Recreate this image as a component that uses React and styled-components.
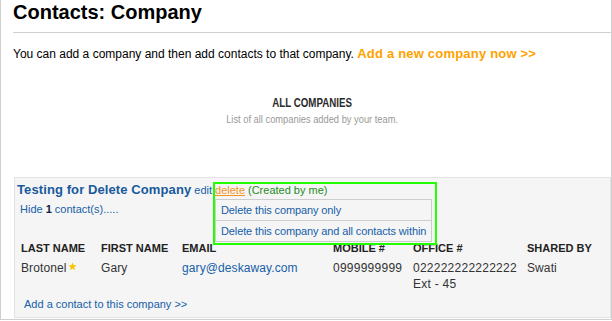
import React from "react";
import styled, { createGlobalStyle } from "styled-components";

const Global = createGlobalStyle`
  html, body { margin: 0; padding: 0; background: #fff; }
  body { font-family: "Liberation Sans", Arial, Helvetica, sans-serif; }
`;

const Page = styled.div`
  box-sizing: border-box;
  width: 612px;
  height: 320px;
  padding-left: 12px;
  border-left: 1px solid #cfcfcf;
  border-right: 1px solid #cfcfcf;
  border-bottom: 1px solid #cfcfcf;
  display: flex;
  flex-direction: column;
`;

const Title = styled.h1`
  margin: 0;
  font-size: 20px;
  line-height: 24px;
  font-weight: bold;
  color: #000;
`;

const Rule = styled.div`
  margin-top: 8px;
  border-top: 1px solid #cfcfcf;
`;

const Intro = styled.p`
  margin: 13px 0 0;
  font-size: 12px;
  line-height: 16px;
  color: #000;
`;

const AddCompany = styled.a`
  font-size: 13px;
  font-weight: bold;
  color: #ffa200;
  text-decoration: none;
  letter-spacing: 0.2px;
`;

const Section = styled.div`
  margin-top: 33px;
  display: flex;
  flex-direction: column;
  align-items: center;
`;

const SectionTitle = styled.div`
  font-size: 12px;
  line-height: 16px;
  font-weight: bold;
  color: #2a2a2a;
  transform: scaleX(0.81);
`;

const SectionSub = styled.div`
  font-size: 11.5px;
  line-height: 16px;
  color: #999;
  transform: scaleX(0.81);
`;

const Panel = styled.div`
  margin: 50px 0 2px 1px;
  background: #f5f5f5;
  border: 1px solid #e3e3e3;
  padding: 2px 0 6px 2px;
  flex: 1;
`;

const CompanyLine = styled.div`
  line-height: 18px;
  white-space: nowrap;
`;

const CompanyName = styled.span`
  font-size: 13px;
  font-weight: bold;
  color: #185a9d;
  letter-spacing: 0.1px;
`;

const SmallLink = styled.a`
  font-size: 11px;
  color: ${(p) => p.$color || "#1560a8"};
  text-decoration: ${(p) => (p.$underline ? "underline" : "none")};
  margin-left: ${(p) => p.$gap || 0}px;
`;

const DeleteWrap = styled.span`
  position: relative;
  display: inline-block;
  margin-left: 3px;
`;

const Owner = styled.span`
  font-size: 11px;
  color: #1e8c1e;
  margin-left: 3px;
`;

const Highlight = styled.div`
  position: absolute;
  left: -2px;
  top: 2px;
  width: 224px;
  height: 63px;
  box-sizing: border-box;
  border: 2px solid #22ff00;
  pointer-events: none;
  z-index: 2;
`;

const Menu = styled.ul`
  position: absolute;
  left: 0;
  top: 19px;
  width: 217px;
  margin: 0;
  padding: 0;
  list-style: none;
  box-sizing: border-box;
  border: 1px solid #cdcdcd;
  background: #f5f5f5;
  z-index: 1;
`;

const MenuItem = styled.li`
  height: 20px;
  line-height: 20px;
  padding-left: 5px;
  font-size: 11px;
  letter-spacing: -0.12px;
  color: #1560a8;
  & + & {
    border-top: 1px solid #cdcdcd;
  }
`;

const HideLine = styled.div`
  margin: 3px 0 0 3px;
  font-size: 11px;
  line-height: 14px;
  color: #1560a8;
  b { color: #112244; }
`;

const Table = styled.div`
  margin: 25px 0 0 4px;
  display: grid;
  grid-template-columns: 80px 81px 151px 80px 114px 1fr;
  row-gap: 5px;
`;

const Head = styled.div`
  font-size: 11px;
  line-height: 14px;
  font-weight: bold;
  color: #222;
  white-space: nowrap;
`;

const Cell = styled.div`
  font-size: 12px;
  line-height: 16px;
  color: ${(p) => (p.$link ? "#1560a8" : "#333")};
  letter-spacing: ${(p) => (p.$digits ? "0.25px" : "0.1px")};
  white-space: nowrap;
`;

const Star = styled.svg`
  vertical-align: top;
  margin-top: 2px;
  margin-left: 1px;
`;

const AddContact = styled.a`
  display: block;
  margin: 5px 0 0 7px;
  font-size: 11px;
  line-height: 14px;
  color: #1560a8;
  text-decoration: none;
`;

export default function App() {
  return (
    <>
      <Global />
      <Page>
        <Title>Contacts: Company</Title>
        <Rule />
        <Intro>
          You can add a company and then add contacts to that company.{" "}
          <AddCompany>Add a new company now &gt;&gt;</AddCompany>
        </Intro>
        <Section>
          <SectionTitle>ALL COMPANIES</SectionTitle>
          <SectionSub>List of all companies added by your team.</SectionSub>
        </Section>
        <Panel>
          <CompanyLine>
            <CompanyName>Testing for Delete Company</CompanyName>
            <SmallLink $gap={3}>edit</SmallLink>
            <DeleteWrap>
              <SmallLink $color="#f5921e" $underline>delete</SmallLink>
              <Owner>(Created by me)</Owner>
              <Highlight />
              <Menu>
                <MenuItem>Delete this company only</MenuItem>
                <MenuItem>Delete this company and all contacts within</MenuItem>
              </Menu>
            </DeleteWrap>
          </CompanyLine>
          <HideLine>
            Hide <b>1</b> contact(s).....
          </HideLine>
          <Table>
            <Head>LAST NAME</Head>
            <Head>FIRST NAME</Head>
            <Head>EMAIL</Head>
            <Head>MOBILE #</Head>
            <Head>OFFICE #</Head>
            <Head>SHARED BY</Head>
            <Cell>
              Brotonel
              <Star width="9" height="9" viewBox="0 0 10 10">
                <path
                  d="M5 0.3 L6.2 3.6 L9.7 3.7 L6.9 5.8 L7.9 9.3 L5 7.2 L2.1 9.3 L3.1 5.8 L0.3 3.7 L3.8 3.6 Z"
                  fill="#f8c300"
                />
              </Star>
            </Cell>
            <Cell>Gary</Cell>
            <Cell $link>gary@deskaway.com</Cell>
            <Cell $digits>0999999999</Cell>
            <Cell $digits>
              022222222222222
              <br />
              Ext - 45
            </Cell>
            <Cell>Swati</Cell>
          </Table>
          <AddContact>Add a contact to this company &gt;&gt;</AddContact>
        </Panel>
      </Page>
    </>
  );
}
